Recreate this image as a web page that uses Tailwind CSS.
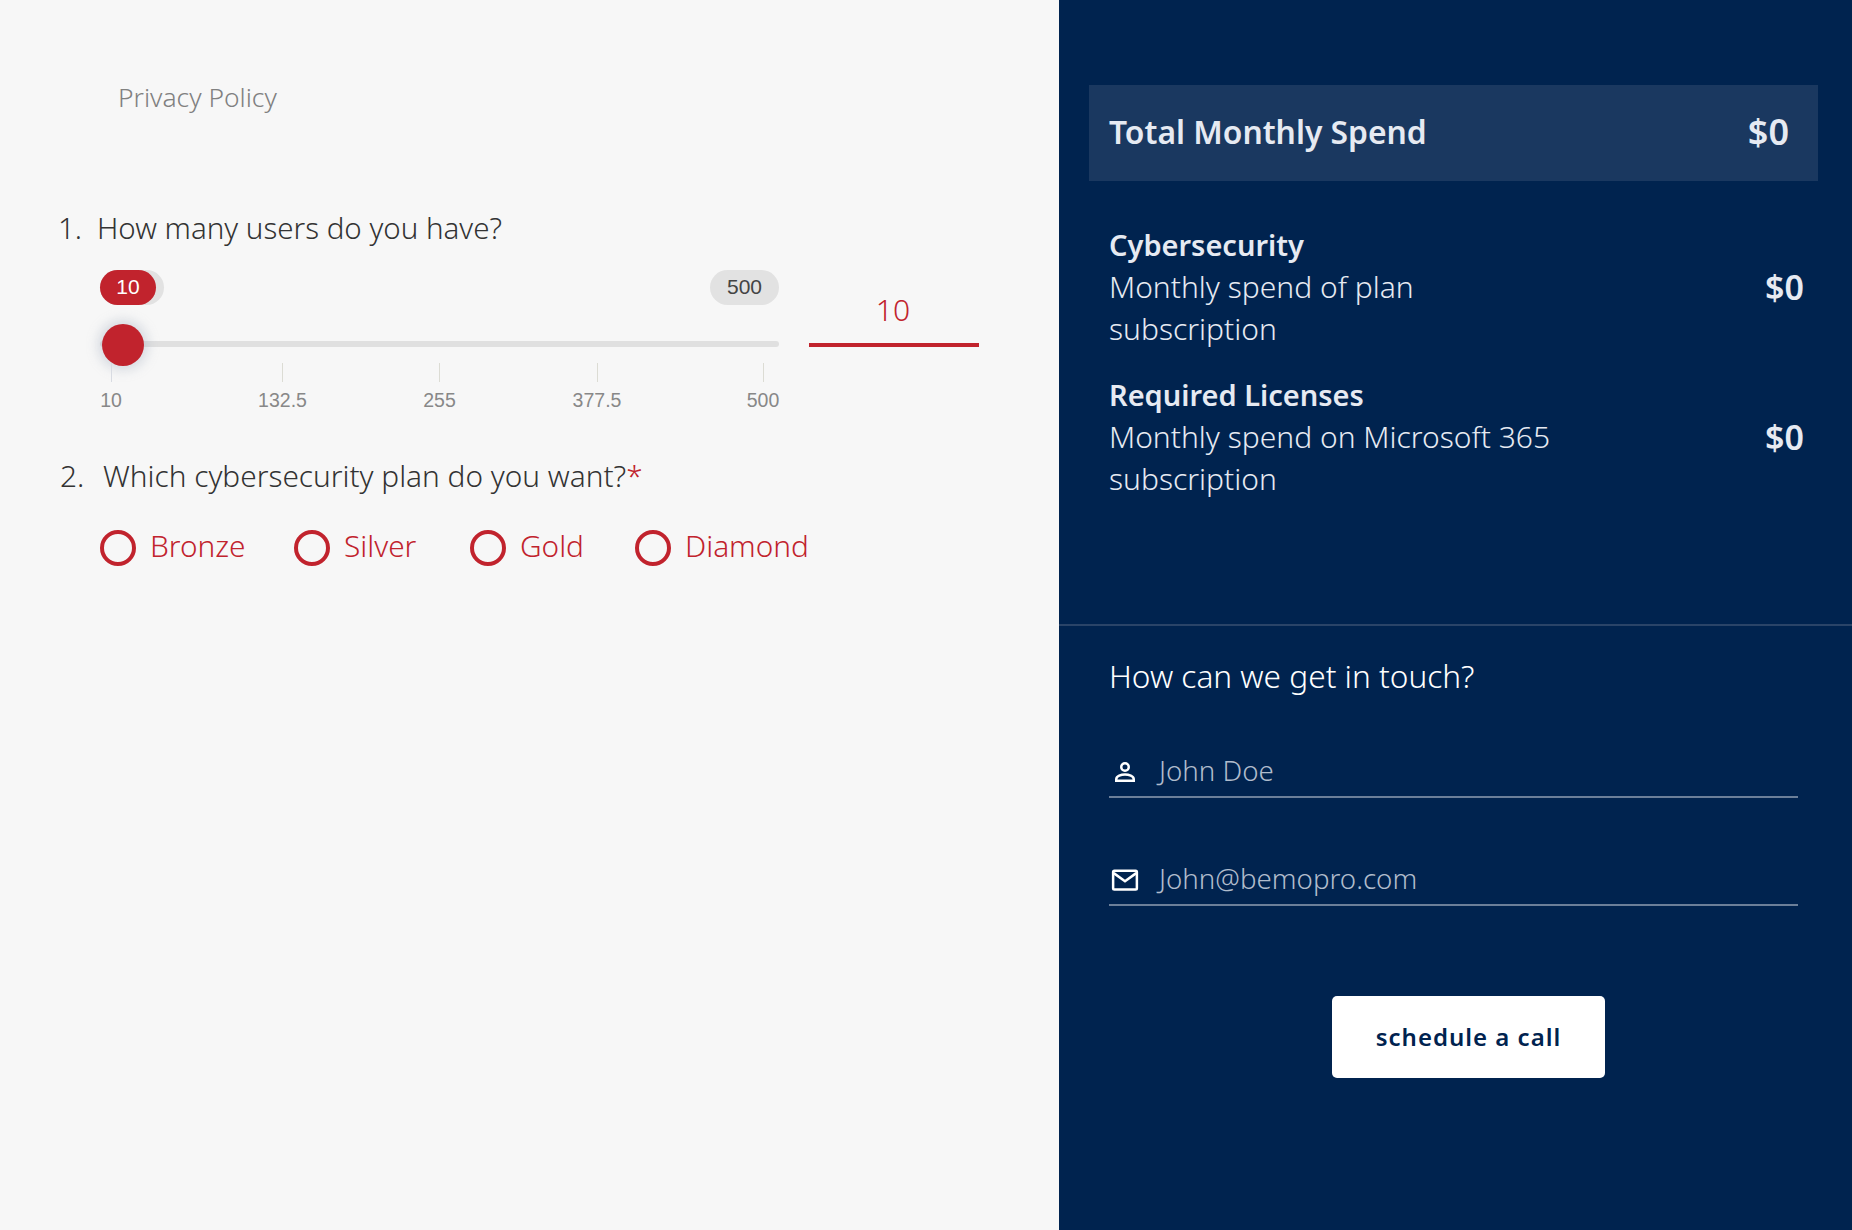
<!DOCTYPE html>
<html lang="en">
<head>
  <meta charset="UTF-8">
  <title>Cost Calculator</title>
  <script src="https://cdn.jsdelivr.net/npm/@tailwindcss/browser@4"></script>
</head>
<body class="bg-[#f7f7f7] font-['Noto_Sans',sans-serif]">
  <div class="flex h-[1230px] overflow-hidden">

    <!-- left: questions -->
    <div class="w-[1059px] shrink-0 bg-[#f7f7f7]">
      <a class="block ml-[118px] pt-[79px] h-[116px] text-[26.4px] leading-[36px] font-light text-[#808080]">Privacy Policy</a>

      <div class="mt-[91px] flex pl-[58px] text-[29.5px] leading-[42px] font-light text-[#333]">
        <span class="w-[39px]">1.</span>
        <span>How many users do you have?</span>
      </div>

      <div class="flex mt-[21px] ml-[100px]">
        <div class="relative w-[679px] h-[164px] font-['Liberation_Sans',sans-serif]">
          <div class="absolute left-0 top-0 w-[64px] h-[35px] rounded-full bg-[#e2e2e2]"></div>
          <div class="absolute left-0 top-0 w-[56px] h-[35px] rounded-full bg-[#c1232d] text-white text-[21px] leading-[33px] text-center">10</div>
          <div class="absolute right-0 top-0 w-[69px] h-[35px] rounded-full bg-[#e2e2e2] text-[#444] text-[21px] leading-[33px] text-center">500</div>
          <div class="absolute left-0 right-0 top-[71px] h-[6px] rounded-full bg-[#e0e0e0]"></div>
          <div class="absolute left-[2px] top-[54px] w-[42px] h-[42px] rounded-full bg-[#c1232d] shadow-[0_0_12px_4px_rgba(150,160,180,0.35)]"></div>
          <div class="absolute left-0 right-0 top-[93px] flex text-[19.5px] leading-[28px] text-[#888]">
            <div class="flex flex-col items-center w-[22px]"><i class="block w-px h-[19px] bg-[#d8dbe2]"></i><span class="mt-[4px]">10</span></div>
            <div class="flex flex-col items-center w-[48px] ml-[136.5px]"><i class="block w-px h-[19px] bg-[#dcdcd4]"></i><span class="mt-[4px]">132.5</span></div>
            <div class="flex flex-col items-center w-[32px] ml-[117px]"><i class="block w-px h-[19px] bg-[#dcdcd4]"></i><span class="mt-[4px]">255</span></div>
            <div class="flex flex-col items-center w-[48px] ml-[117.5px]"><i class="block w-px h-[19px] bg-[#dcdcd4]"></i><span class="mt-[4px]">377.5</span></div>
            <div class="flex flex-col items-center w-[32px] ml-[126px]"><i class="block w-px h-[19px] bg-[#dcdcd4]"></i><span class="mt-[4px]">500</span></div>
          </div>
        </div>
        <div class="ml-[30px] w-[170px] h-[77px] border-b-4 border-[#c1232d] pt-[19px] pr-[2px] text-center text-[30px] leading-[42px] font-light text-[#c1232d]">10</div>
      </div>

      <div class="mt-[21px] flex pl-[60px] text-[29.8px] leading-[42px] font-light text-[#333]">
        <span class="w-[43px]">2.</span>
        <span>Which cybersecurity plan do you want?<span class="text-[#c1232d]">*</span></span>
      </div>

      <div class="flex mt-[27px] ml-[100px] text-[29.8px] leading-[44px] font-light text-[#c1232d]">
        <label class="flex items-center w-[194px]"><i class="block w-[36px] h-[36px] mr-[14px] rounded-full border-4 border-[#c1232d]"></i><span class="pb-[3px]">Bronze</span></label>
        <label class="flex items-center w-[176px]"><i class="block w-[36px] h-[36px] mr-[14px] rounded-full border-4 border-[#c1232d]"></i><span class="pb-[3px]">Silver</span></label>
        <label class="flex items-center w-[165px]"><i class="block w-[36px] h-[36px] mr-[14px] rounded-full border-4 border-[#c1232d]"></i><span class="pb-[3px]">Gold</span></label>
        <label class="flex items-center"><i class="block w-[36px] h-[36px] mr-[14px] rounded-full border-4 border-[#c1232d]"></i><span class="pb-[3px]">Diamond</span></label>
      </div>
    </div>

    <!-- right: summary + contact -->
    <div class="flex-1 bg-[#00234f] text-[#e6eaf2]">
      <div class="h-[626px] border-b-2 border-[#2a4468] pt-[85px]">
        <div class="ml-[30px] w-[729px] h-[96px] pl-[20px] pr-[29px] pb-[3px] bg-[#1a3860] flex items-center justify-between text-[31.8px] font-semibold">
          <span>Total Monthly Spend</span><span class="text-[36px]">$0</span>
        </div>
        <div class="mt-[43px] ml-[50px] mr-[48px] text-[30px] leading-[42px] font-light flex flex-col gap-[24px]">
          <div class="flex justify-between">
            <div class="w-[440px]"><div class="font-semibold text-[29px]">Cybersecurity</div>Monthly spend of plan subscription</div>
            <div class="mt-[42px] font-semibold text-[34px]">$0</div>
          </div>
          <div class="flex justify-between">
            <div class="w-[480px]"><div class="font-semibold text-[29px]">Required Licenses</div>Monthly spend on Microsoft 365 subscription</div>
            <div class="mt-[42px] font-semibold text-[34px]">$0</div>
          </div>
        </div>
      </div>

      <div class="pl-[50px]">
        <div class="mt-[28px] text-[31.6px] leading-[44px] font-light text-white">How can we get in touch?</div>

        <div class="mt-[50px] w-[689px] h-[50px] border-b-2 border-[#6b7f99] flex items-center">
          <svg class="ml-[1px] w-[30px] h-[30px]" viewBox="0 0 24 24" fill="none" stroke="#fff" stroke-width="2"><circle cx="12" cy="8" r="3"/><path d="M5 19v-1.2C5 15.2 9 14 12 14s7 1.2 7 3.8V19z"/></svg>
          <span class="ml-[19px] pb-[2px] text-[27.7px] font-light text-[#b0bccc]">John Doe</span>
        </div>

        <div class="mt-[58px] w-[689px] h-[50px] border-b-2 border-[#6b7f99] flex items-center">
          <svg class="ml-[1px] w-[30px] h-[30px]" viewBox="0 0 24 24" fill="none" stroke="#fff" stroke-width="2"><rect x="2.5" y="4.5" width="19" height="15" rx="1"/><path d="M3 6.5l9 6.5 9-6.5"/></svg>
          <span class="ml-[19px] pb-[2px] text-[27.7px] font-light text-[#b0bccc]">John@bemopro.com</span>
        </div>

        <div class="mt-[90px] ml-[223px] w-[273px] h-[82px] rounded-[5px] bg-white flex items-center justify-center text-[24px] font-semibold tracking-[1px] text-[#00234f]">schedule a call</div>
      </div>
    </div>
  </div>
</body>
</html>
